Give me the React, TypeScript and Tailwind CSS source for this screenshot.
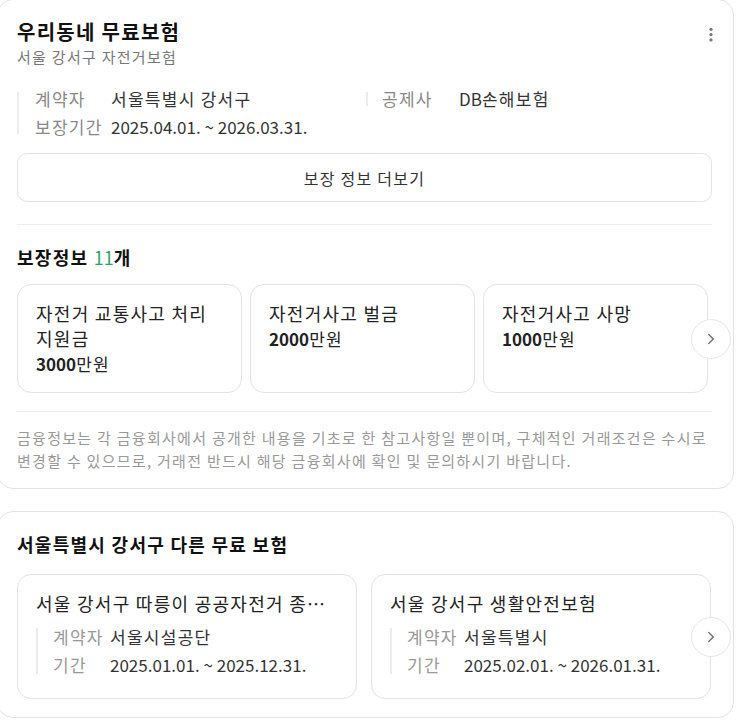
import { ChevronRight } from "lucide-react";

const coverages = [
  { name: "자전거 교통사고 처리 지원금", amount: "3000" },
  { name: "자전거사고 벌금", amount: "2000" },
  { name: "자전거사고 사망", amount: "1000" },
];

const others = [
  {
    title: "서울 강서구 따릉이 공공자전거 종합보험",
    contractor: "서울시설공단",
    period: "2025.01.01. ~ 2025.12.31.",
  },
  {
    title: "서울 강서구 생활안전보험",
    contractor: "서울특별시",
    period: "2025.02.01. ~ 2026.01.31.",
  },
];

function NextButton() {
  return (
    <button className="absolute right-[-19px] top-1/2 -translate-y-1/2 flex h-[40px] w-[40px] items-center justify-center rounded-full border border-[#e6e6e6] bg-white">
      <ChevronRight size={18} strokeWidth={1.6} className="text-[#666]" />
    </button>
  );
}

function Dots() {
  return (
    <svg width="4" height="16" viewBox="0 0 4 16" className="mt-[5px] text-[#777]">
      <circle cx="2" cy="2.3" r="1.6" fill="currentColor" />
      <circle cx="2" cy="7.6" r="1.6" fill="currentColor" />
      <circle cx="2" cy="12.9" r="1.6" fill="currentColor" />
    </svg>
  );
}

export default function App() {
  return (
    <div
      className="-ml-[3px] -mt-px w-[737px] bg-white tracking-[0.08em] text-[#222]"
      style={{ fontFamily: '"Noto Sans CJK KR", "Noto Sans", sans-serif' }}
    >
      {/* Main card */}
      <section className="rounded-2xl border border-[#e3e3e3] bg-white pb-[16px] pl-[19px] pr-[21px] pt-[19px]">
        <div className="flex items-start justify-between">
          <div>
            <h1 className="text-[20px] font-bold leading-[26px] text-[#111]">우리동네 무료보험</h1>
            <p className="mt-[2px] text-[15px] leading-[20px] text-[#777]">서울 강서구 자전거보험</p>
          </div>
          <div className="mr-[-1px] pt-[3px]">
            <Dots />
          </div>
        </div>

        <div className="mt-[21px] flex text-[17px] leading-[22px]">
          <div className="flex w-[349px]">
            <div className="my-[4px] w-[2px] bg-[#ececec]" />
            <div className="flex flex-col gap-[6px] pl-[16px]">
              <div className="flex">
                <span className="w-[76px] shrink-0 text-[#888]">계약자</span>
                <span className="text-[#333]">서울특별시 강서구</span>
              </div>
              <div className="flex">
                <span className="w-[76px] shrink-0 text-[#888]">보장기간</span>
                <span className="tracking-normal text-[#333]">2025.04.01. ~ 2026.03.31.</span>
              </div>
            </div>
          </div>
          <div className="flex self-start">
            <div className="my-[4px] w-[2px] bg-[#ececec]" />
            <div className="flex pl-[14px]">
              <span className="w-[77px] shrink-0 text-[#888]">공제사</span>
              <span className="text-[#333]">
                <span className="tracking-normal">DB</span>손해보험
              </span>
            </div>
          </div>
        </div>

        <button className="mt-[15px] flex h-[49px] w-full items-center justify-center rounded-[10px] border border-[#e3e3e3] text-[16px] tracking-[0.08em] text-[#333]">
          보장 정보 더보기
        </button>

        <div className="mt-[22px] border-t border-[#eeeeee]" />

        <h2 className="mt-[19px] text-[18px] font-bold leading-[26px] text-[#111]">
          보장정보 <span className="font-normal tracking-normal text-[#2aa65e]">11</span>개
        </h2>

        <div className="relative mt-[14px]">
          <div className="flex gap-[8px]">
            {coverages.map((c) => (
              <div
                key={c.name}
                className="h-[109px] w-[225px] shrink-0 rounded-[14px] border border-[#e3e3e3] pl-[18px] pr-[12px] pt-[16px]"
              >
                <p className="text-[18px] leading-[25px] text-[#222]">{c.name}</p>
                <p className="text-[17px] leading-[26px] text-[#222]">
                  <span className="font-bold tracking-normal">{c.amount}</span>만원
                </p>
              </div>
            ))}
          </div>
          <NextButton />
        </div>

        <div className="mt-[18px] border-t border-[#eeeeee]" />

        <p className="mt-[14px] text-[15px] leading-[23px] text-[#999]">
          금융정보는 각 금융회사에서 공개한 내용을 기초로 한 참고사항일 뿐이며, 구체적인 거래조건은 수시로
          <br />
          변경할 수 있으므로, 거래전 반드시 해당 금융회사에 확인 및 문의하시기 바랍니다.
        </p>
      </section>

      {/* Other insurances */}
      <section className="mt-[22px] rounded-2xl border border-[#e3e3e3] bg-white pb-[18px] pl-[19px] pr-[21px] pt-[19px]">
        <h2 className="text-[18px] font-bold leading-[26px] text-[#111]">서울특별시 강서구 다른 무료 보험</h2>

        <div className="relative mt-[17px]">
          <div className="flex gap-[14px]">
            {others.map((o) => (
              <div
                key={o.title}
                className="h-[125px] w-[340px] shrink-0 rounded-[14px] border border-[#e3e3e3] pl-[18px] pr-[18px] pt-[16px]"
              >
                <p className="truncate text-[18px] leading-[25px] text-[#222]">{o.title}</p>
                <div className="mt-[10px] flex text-[17px] leading-[22px]">
                  <div className="my-[2px] w-[2px] bg-[#ececec]" />
                  <div className="flex flex-col gap-[6px] pl-[15px]">
                    <div className="flex">
                      <span className="w-[57px] shrink-0 text-[#999]">계약자</span>
                      <span className="text-[#333]">{o.contractor}</span>
                    </div>
                    <div className="flex">
                      <span className="w-[57px] shrink-0 text-[#999]">기간</span>
                      <span className="tracking-normal text-[#333]">{o.period}</span>
                    </div>
                  </div>
                </div>
              </div>
            ))}
          </div>
          <NextButton />
        </div>
      </section>
    </div>
  );
}
